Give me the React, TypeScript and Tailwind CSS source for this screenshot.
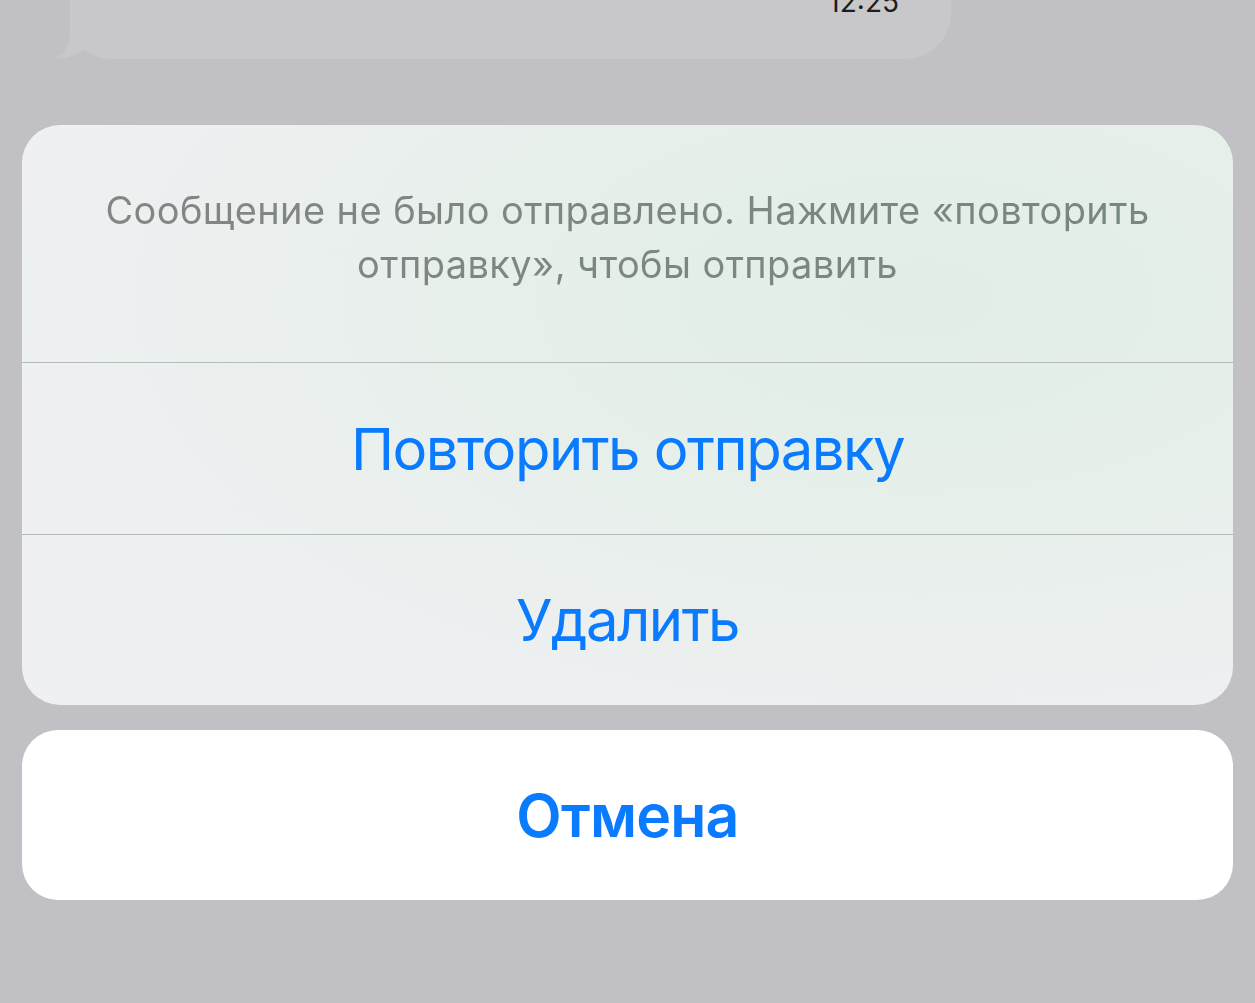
import React from "react";

const font = { fontFamily: "Inter, 'Noto Sans', sans-serif" };

const Bubble: React.FC = () => (
  <div className="relative ml-[70px] w-[881px] h-[59px] bg-[#c8c8ca] rounded-bl-[40px] rounded-br-[46px]">
    <svg
      className="absolute left-[-18px] top-0"
      width="60"
      height="59"
      viewBox="52 0 60 59"
    >
      <path
        d="M70 15 L70 32 C70 48 62 56 52 58.5 C64 59 78 55 88 48 C95 55 101 59 112 59 L112 15 Z"
        fill="#c8c8ca"
      />
    </svg>
    <span className="absolute right-[52px] top-[-12px] text-[28px] leading-none text-[#1c1c1e]">
      12:25
    </span>
  </div>
);

const ActionRow: React.FC<{ label: string; last?: boolean }> = ({ label, last }) => (
  <button
    className={
      last
        ? "flex h-[170px] w-full items-center justify-center text-[58px] leading-none tracking-[-1.5px] text-[#0a7aff]"
        : "flex h-[172px] w-full items-center justify-center border-b border-[#b4bab5] text-[58px] leading-none tracking-[-1.5px] text-[#0a7aff]"
    }
  >
    {label}
  </button>
);

const App: React.FC = () => {
  return (
    <div className="min-h-screen w-full overflow-hidden bg-[#c1c0c5]" style={font}>
      <Bubble />

      <div className="mx-[22px] mt-[66px] overflow-hidden rounded-[38px] bg-[radial-gradient(ellipse_75%_80%_at_74%_30%,#e0eee6_0%,#e6efea_40%,#eef0f1_100%)]">
        <div className="h-[238px] border-b border-[#b4bab5] pt-[58px] text-center text-[38px] leading-[54px] tracking-[0.4px]">
          <p className="bg-gradient-to-r from-[#858585] via-[#7c8780] to-[#76887c] bg-clip-text text-transparent">
            Сообщение не было отправлено. Нажмите «повторить
            <br />
            отправку», чтобы отправить
          </p>
        </div>
        <ActionRow label="Повторить отправку" />
        <ActionRow label="Удалить" last />
      </div>

      <div className="mx-[22px] mt-[25px] flex h-[170px] items-center justify-center rounded-[36px] bg-white">
        <span className="text-[59px] font-semibold leading-none tracking-[-0.8px] text-[#0a7aff]">
          Отмена
        </span>
      </div>
    </div>
  );
};

export default App;
